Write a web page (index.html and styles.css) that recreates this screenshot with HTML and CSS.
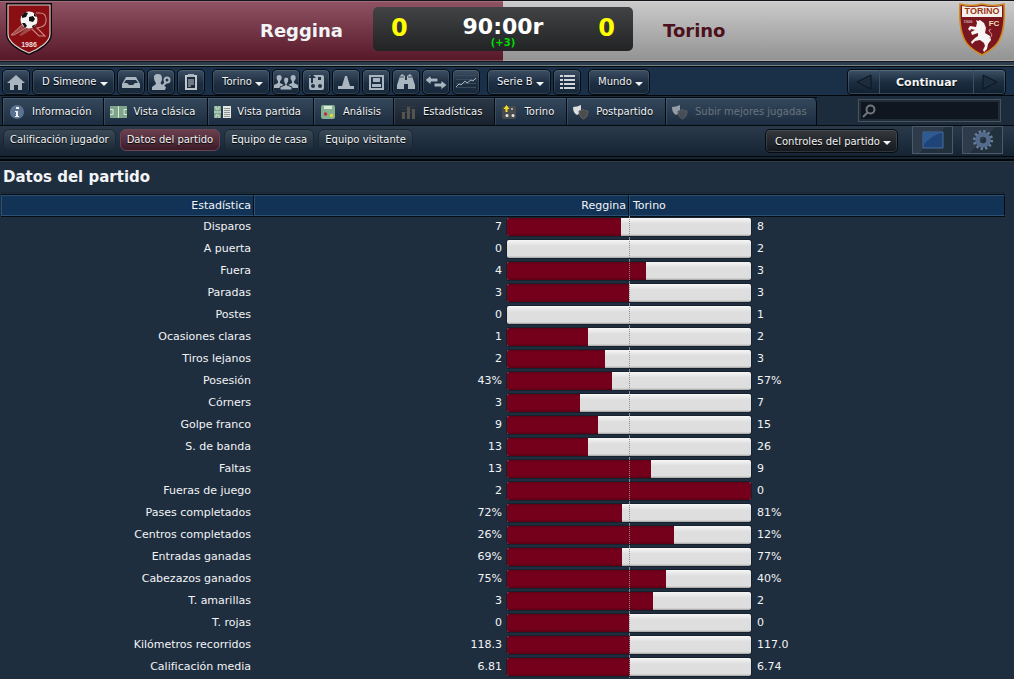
FILE: index.html
```
<!DOCTYPE html>
<html lang="es">

<head>
    <title>Reggina - Torino | Datos del partido</title>
    <meta charset="UTF-8">
    <meta name="viewport" content="width=device-width, initial-scale=1.0">
    <link rel="stylesheet" href="styles.css">
</head>

<body>
    <header class="match-header">
        <div class="team home">
            <svg class="crest" viewBox="0 0 48 54" role="img" aria-label="Reggina">
                <path d="M1 1h46v31c0 9-12 17-23 21C13 49 1 41 1 32z" fill="#0b0709"/>
                <path d="M3 3h42v29c0 8-11 15-21 19C14 47 3 40 3 32z" fill="#8a0f13" stroke="#d8cfcf" stroke-width="1.2"/>
                <path d="M31 11h4c8 0 8 12 1 14l-4 1 8 8h-6l-9-9" fill="none" stroke="#c98a8a" stroke-width="1.1"/>
                <path d="M6 33l13-12 4 4-14 8z" fill="#a04848" stroke="#d7aaaa" stroke-width=".7"/>
                <path d="M14 33l10-9 4 3-12 7z" fill="#a04848"/>
                <circle cx="24" cy="18" r="8.5" fill="#f3f3f3"/>
                <path d="M24 15l4-1 2 3-2 3-4-1zM17 13l3-3 3 1-2 4-4 1zM17 21l3 0 2 3-2 2zM29 11l3 4-3-1zM27 24l4-2-3 4z" fill="#111"/>
                <text x="24" y="45" class="crest-year">1986</text>
            </svg>
            <h2>Reggina</h2>
        </div>
        <div class="scoreboard">
            <span class="score">0</span>
            <div class="clock">
                <span class="time">90:00r</span>
                <span class="extra">(+3)</span>
            </div>
            <span class="score">0</span>
        </div>
        <div class="team away">
            <h2>Torino</h2>
            <svg class="crest" viewBox="0 0 48 54" role="img" aria-label="Torino">
                <path d="M2 2q11 3 22 0q11 3 22 0c1 16 0 33-9 42q-5 5-13 9q-8-4-13-9C2 35 1 18 2 2z" fill="#7a1620" stroke="#d18a22" stroke-width="1.6"/>
                <path d="M4 4q10 2 20 0q10 2 20 0v11H4z" fill="#f4f1ec"/>
                <text x="24" y="12" class="crest-name">TORINO</text>
                <text x="10" y="21" class="crest-small">1906</text>
                <text x="36" y="24" class="crest-fc">FC</text>
                <path d="M18 18l2 1 2-1 4 3 2 5-1 5 5 3 1 4-3 4-1 5-3 3-1-2 2-4-1-3-4-3-5 1-3 3-1-2 4-4 3-2 0-3-6 2-1-3 4-2-4-1-1 2-2-2 2-3 6 1 1-4z" fill="#f7f5f3"/>
                <path d="M31 36c5-2 2-5 0-7 0-2 2-2 2-1" fill="none" stroke="#d9a7ab"/>
            </svg>
        </div>
    </header>

    <div class="main-bar">
        <div class="group">
            <button class="icon-btn" aria-label="Inicio"><svg viewBox="0 0 20 18"><path d="M10 2l9 8h-3v7h-4v-5H8v5H4v-7H1z"/></svg></button>
            <span class="dropdown"><select aria-label="Entrenador"><option>D Simeone</option></select></span>
            <button class="icon-btn" aria-label="Bandeja de entrada"><svg viewBox="0 0 20 18"><path d="M5 4h10l4 7v4H1v-4z"/><path class="cut" d="M5 7h10l2 3h-3l-2 2H8l-2-2H3z"/></svg></button>
            <button class="icon-btn" aria-label="Ojeadores"><svg viewBox="0 0 20 18"><path d="M7 1c4 0 4 3 4 5 0 3-2 3-1 5l5 3-1 3H1v-3l4-3c0-2-2-3-2-6s1-4 4-4z"/><path d="M14 9l-4 4 1 2 5-5z"/><circle cx="16" cy="7" r="2.500" class="ring"/></svg></button>
            <button class="icon-btn" aria-label="Notas"><svg viewBox="0 0 20 18"><path d="M5 3h10v13H5z" fill="#1b2a3a" stroke="#c0c8ce" stroke-width="2"/><path d="M7 1h6v3H7z"/><path d="M7 7h6M7 9h6M7 11h6M7 13h3" stroke="#c0c8ce"/></svg></button>
        </div>
        <div class="group">
            <span class="dropdown"><select aria-label="Club"><option>Torino</option></select></span>
            <button class="icon-btn" aria-label="Plantilla"><svg class="wide" viewBox="0 0 24 18"><path d="M5 2c4 0 3 5 1 6v2l4 2v3H0v-3l4-2V8C2 6 2 2 5 2zM19 2c4 0 3 5 1 6v2l4 2v3H14v-3l4-2V8c-2-2-2-6 1-6z"/><path class="edge" d="M12 4c4 0 3 5 1 7v1l5 2v3H6v-3l5-2v-1c-2-2-2-7 1-7z"/></svg></button>
            <button class="icon-btn" aria-label="Tácticas"><svg viewBox="0 0 20 18"><rect x="3" y="2" width="15" height="15" rx="2"/><path class="cut" d="M6 1l4 4H7v5H5V5H2z"/><circle class="cut" cx="7" cy="13" r="2"/><circle class="cut" cx="14" cy="13" r="2"/><path class="cut" d="M12 4h3v3h-3z"/></svg></button>
            <button class="icon-btn" aria-label="Entrenamiento"><svg viewBox="0 0 20 18"><path d="M9 3h2l3 10h4v3H2v-3h4z"/></svg></button>
            <button class="icon-btn" aria-label="Campo"><svg viewBox="0 0 20 18"><path class="stroke" d="M4 3h13v13H4z"/><path d="M7 5h7v4H7zM6 11h9v3H6z"/></svg></button>
            <button class="icon-btn" aria-label="Buscar jugadores"><svg viewBox="0 0 20 18"><path d="M4 3l2-2 3 2v4h2V3l3-2 2 2 3 9v4h-7v-5H8v5H1v-4z"/><path class="line-dark" d="M4 4h4M12 4h4"/></svg></button>
            <button class="icon-btn" aria-label="Traspasos"><svg class="wide" viewBox="0 0 24 18"><path d="M1 7l6-5v3h7v4H7v3zM23 12l-6-5v3h-7v4h7v3z" class="edge"/></svg></button>
            <button class="icon-btn" aria-label="Finanzas"><svg class="wide" viewBox="0 0 24 18"><path class="grid-line" d="M2 2.500h20M2 6.500h20M2 10.500h20M2 14.500h20"/><path class="stroke thin" d="M2 14l3-3 2 1 4-4 2 2 4-3 2 1 3-3"/></svg></button>
        </div>
        <div class="group">
            <span class="dropdown"><select aria-label="Competición"><option>Serie B</option></select></span>
            <button class="icon-btn" aria-label="Clasificación"><svg viewBox="0 0 20 18"><path d="M3 2h3v2H3zM7 2h11v2H7zM3 6h3v2H3zM7 6h11v2H7zM3 10h3v2H3zM7 10h11v2H7zM3 14h3v2H3zM7 14h11v2H7z" fill="#d0d6db"/></svg></button>
        </div>
        <div class="group">
            <span class="dropdown"><select aria-label="Mundo"><option>Mundo</option></select></span>
        </div>
        <div class="continue">
            <button class="step" aria-label="Anterior"><svg viewBox="0 0 18 18"><path d="M16 2v14L2 9z"/></svg></button>
            <button class="go">Continuar</button>
            <button class="step" aria-label="Siguiente"><svg viewBox="0 0 18 18"><path d="M2 2v14l14-7z"/></svg></button>
        </div>
    </div>

    <div class="tab-bar">
        <nav class="tabs">
            <a href="#"><svg viewBox="0 0 18 16"><circle cx="9" cy="8" r="7" fill="#5b7390"/><path d="M8 3h3v2H8zM7 7h3v5h1v1H7v-1h1V8H7z" fill="#eef2f5"/></svg>Información</a>
            <a href="#"><svg viewBox="0 0 18 16"><path d="M1 2h17v12H1z" fill="#7fa68b"/><path d="M9.500 2v12M1 5.500h3v5H1M18 5.500h-3v5h3" fill="none" stroke="#d5ead9"/></svg>Vista clásica</a>
            <a href="#"><svg viewBox="0 0 18 16"><path d="M1 2h7v12H1z" fill="#7fa68b"/><path d="M1 8h7M3 2v3h3V2M3 14v-3h3v3" fill="none" stroke="#d5ead9"/><path d="M10 2h8v12h-8z" fill="#e5e7e5"/><path d="M11 4.500h6M11 6.500h6M11 8.500h6M11 10.500h6M11 12.500h6" stroke="#8d9494"/></svg>Vista partida</a>
            <a href="#"><svg viewBox="0 0 18 16"><rect x="2" y="1" width="14" height="14" rx="2" fill="#86b092"/><path d="M5 2h8v3H5z" fill="#d5ead9"/><circle cx="6.500" cy="10" r="1.700" fill="#b52f35"/><circle cx="12.500" cy="11.500" r="1.700" fill="#e5dc2a"/></svg>Análisis</a>
            <a href="#" class="current"><svg viewBox="0 0 18 16"><path d="M2 2.500h14M2 5.500h14M2 8.500h14" stroke="#2d3947"/><path d="M3 8h3v7H3zM8 3h3v12H8zM13 5h3v10h-3z" fill="#56534f"/></svg>Estadísticas</a>
            <a href="#"><svg viewBox="0 0 18 16"><rect x="2" y="2" width="14" height="13" rx="2" fill="#4a4b4d"/><path d="M6.500 1l3 4h-2v3h-2V5h-2z" fill="#f0e02c"/><circle cx="7" cy="11.500" r="1.500" fill="#e8e8e8"/><circle cx="13" cy="11.500" r="1.500" fill="#e8e8e8"/><path d="M11 4h2v2h-2z" fill="#a8a8a8"/></svg>Torino</a>
            <a href="#"><svg viewBox="0 0 18 16"><path d="M1 3q4 0 8-2v5q-1 4-4 5-4-2-4-8z" fill="#dcdedf"/><path d="M7 7q3 0 4-1.500Q13 7 16 7q0 6-4.500 8Q7 13 7 7z" fill="#4c4c4c" stroke="#5e6062"/></svg>Postpartido</a>
            <a href="#" class="disabled" aria-disabled="true"><svg viewBox="0 0 18 16"><path d="M1 3q4 0 8-2v5q-1 4-4 5-4-2-4-8z" fill="#dcdedf"/><path d="M7 7q3 0 4-1.500Q13 7 16 7q0 6-4.500 8Q7 13 7 7z" fill="#5c5c5c" stroke="#77797b"/></svg>Subir mejores jugadas</a>
        </nav>
        <label class="search">
            <svg viewBox="0 0 14 14" aria-hidden="true"><circle cx="8.500" cy="5.500" r="4"/><path d="M5.500 8.500L1 13"/></svg>
            <input type="search" aria-label="Buscar">
        </label>
    </div>

    <div class="sub-bar">
        <nav class="sub-tabs">
            <a href="#">Calificación jugador</a>
            <a href="#" class="current">Datos del partido</a>
            <a href="#">Equipo de casa</a>
            <a href="#">Equipo visitante</a>
        </nav>
        <div class="match-controls">
            <span class="dropdown dark"><select aria-label="Controles"><option>Controles del partido</option></select></span>
            <button class="square-btn" aria-label="Pantalla"><svg viewBox="0 0 24 20"><path d="M2 2h20v16H2z" fill="#1f4578" stroke="#4a6d9b"/><path d="M2.500 2.500h19Q9 6 2.500 15z" fill="#2f5b95"/></svg></button>
            <button class="square-btn" aria-label="Preferencias"><svg viewBox="0 0 24 24"><circle cx="12" cy="12" r="9.500" fill="none" stroke="#6a7f9b" stroke-width="3" stroke-dasharray="2.500 2.470"/><circle cx="12" cy="12" r="6" fill="none" stroke="#546b8b" stroke-width="5"/></svg></button>
        </div>
    </div>

    <main>
        <h1>Datos del partido</h1>
        <table class="stats">
            <colgroup>
                <col class="col-name">
                <col class="col-value">
                <col class="col-half">
                <col class="col-half">
                <col>
            </colgroup>
            <thead>
                <tr>
                    <th scope="col">Estadística</th>
                    <th scope="col" colspan="2">Reggina</th>
                    <th scope="col" colspan="2" class="away-head">Torino</th>
                </tr>
            </thead>
            <tbody>
                <tr><th scope="row">Disparos</th><td class="home-value">7</td><td class="bar-cell" colspan="2"><div class="bar"><div class="fill" style="width: 46.7%"></div></div></td><td>8</td></tr>
                <tr><th scope="row">A puerta</th><td class="home-value">0</td><td class="bar-cell" colspan="2"><div class="bar"><div class="fill" style="width: 0%"></div></div></td><td>2</td></tr>
                <tr><th scope="row">Fuera</th><td class="home-value">4</td><td class="bar-cell" colspan="2"><div class="bar"><div class="fill" style="width: 57.1%"></div></div></td><td>3</td></tr>
                <tr><th scope="row">Paradas</th><td class="home-value">3</td><td class="bar-cell" colspan="2"><div class="bar"><div class="fill" style="width: 50%"></div></div></td><td>3</td></tr>
                <tr><th scope="row">Postes</th><td class="home-value">0</td><td class="bar-cell" colspan="2"><div class="bar"><div class="fill" style="width: 0%"></div></div></td><td>1</td></tr>
                <tr><th scope="row">Ocasiones claras</th><td class="home-value">1</td><td class="bar-cell" colspan="2"><div class="bar"><div class="fill" style="width: 33.3%"></div></div></td><td>2</td></tr>
                <tr><th scope="row">Tiros lejanos</th><td class="home-value">2</td><td class="bar-cell" colspan="2"><div class="bar"><div class="fill" style="width: 40%"></div></div></td><td>3</td></tr>
                <tr><th scope="row">Posesión</th><td class="home-value">43%</td><td class="bar-cell" colspan="2"><div class="bar"><div class="fill" style="width: 43%"></div></div></td><td>57%</td></tr>
                <tr><th scope="row">Córners</th><td class="home-value">3</td><td class="bar-cell" colspan="2"><div class="bar"><div class="fill" style="width: 30%"></div></div></td><td>7</td></tr>
                <tr><th scope="row">Golpe franco</th><td class="home-value">9</td><td class="bar-cell" colspan="2"><div class="bar"><div class="fill" style="width: 37.5%"></div></div></td><td>15</td></tr>
                <tr><th scope="row">S. de banda</th><td class="home-value">13</td><td class="bar-cell" colspan="2"><div class="bar"><div class="fill" style="width: 33.3%"></div></div></td><td>26</td></tr>
                <tr><th scope="row">Faltas</th><td class="home-value">13</td><td class="bar-cell" colspan="2"><div class="bar"><div class="fill" style="width: 59.1%"></div></div></td><td>9</td></tr>
                <tr><th scope="row">Fueras de juego</th><td class="home-value">2</td><td class="bar-cell" colspan="2"><div class="bar"><div class="fill" style="width: 100%"></div></div></td><td>0</td></tr>
                <tr><th scope="row">Pases completados</th><td class="home-value">72%</td><td class="bar-cell" colspan="2"><div class="bar"><div class="fill" style="width: 47.1%"></div></div></td><td>81%</td></tr>
                <tr><th scope="row">Centros completados</th><td class="home-value">26%</td><td class="bar-cell" colspan="2"><div class="bar"><div class="fill" style="width: 68.4%"></div></div></td><td>12%</td></tr>
                <tr><th scope="row">Entradas ganadas</th><td class="home-value">69%</td><td class="bar-cell" colspan="2"><div class="bar"><div class="fill" style="width: 47.3%"></div></div></td><td>77%</td></tr>
                <tr><th scope="row">Cabezazos ganados</th><td class="home-value">75%</td><td class="bar-cell" colspan="2"><div class="bar"><div class="fill" style="width: 65.2%"></div></div></td><td>40%</td></tr>
                <tr><th scope="row">T. amarillas</th><td class="home-value">3</td><td class="bar-cell" colspan="2"><div class="bar"><div class="fill" style="width: 60%"></div></div></td><td>2</td></tr>
                <tr><th scope="row">T. rojas</th><td class="home-value">0</td><td class="bar-cell" colspan="2"><div class="bar"><div class="fill" style="width: 50%"></div></div></td><td>0</td></tr>
                <tr><th scope="row">Kilómetros recorridos</th><td class="home-value">118.3</td><td class="bar-cell" colspan="2"><div class="bar"><div class="fill" style="width: 50.3%"></div></div></td><td>117.0</td></tr>
                <tr><th scope="row">Calificación media</th><td class="home-value">6.81</td><td class="bar-cell" colspan="2"><div class="bar"><div class="fill" style="width: 50.3%"></div></div></td><td>6.74</td></tr>
            </tbody>
        </table>
    </main>
</body>

</html>
```
FILE: styles.css
```
* {
    box-sizing: border-box;
}

body {
    margin: 0;
    background: #1f2e3f;
    color: #f2f4f6;
    font: 11px/14px "DejaVu Sans", Verdana, sans-serif;
}

button,
select,
input {
    font: inherit;
    color: inherit;
}

button {
    padding: 0;
    cursor: pointer;
}

a {
    color: inherit;
    text-decoration: none;
}

/* match header */
.match-header {
    display: grid;
    grid-template-columns: 1fr 260px 1fr;
    align-items: center;
    height: 62px;
    padding-right: 8px;
    border-top: 1px solid #15151c;
    border-bottom: 1px solid #15151c;
    box-shadow: inset 0 1px rgba(255, 255, 255, 0.15), inset 0 -1px rgba(255, 255, 255, 0.25);
    background:
        linear-gradient(#8f5364, #561828) 0 0 / calc(50% - 4px) 100% no-repeat,
        linear-gradient(#cbcbcb, #929292);
}

.team {
    display: flex;
    align-items: center;
    justify-content: space-between;
    padding-bottom: 4px;
}

.team h2 {
    margin: 4px 0 0;
    font-size: 18px;
    line-height: 22px;
}

.home {
    padding-left: 5px;
    padding-right: 30px;
}

.away {
    padding-left: 30px;
    color: #4d111d;
}

.crest {
    width: 48px;
    height: 54px;
}

.crest text {
    font-family: "Liberation Sans", Arial, sans-serif;
    font-weight: bold;
    text-anchor: middle;
}

.crest-year {
    font-size: 7px;
    fill: #f1dede;
}

.crest-name {
    font-size: 9px;
    fill: #9a3518;
}

.crest-small {
    font-size: 4px;
    fill: #d5a9ad;
}

.crest-fc {
    font-size: 8px;
    fill: #f3dfb8;
}

.scoreboard {
    display: flex;
    align-items: center;
    justify-content: space-between;
    height: 44px;
    margin-bottom: 4px;
    padding: 0 18px;
    border-radius: 5px;
    background: linear-gradient(#414345, #212325);
    font-weight: bold;
}

.score {
    color: #ffff00;
    font-size: 24px;
    line-height: 28px;
    margin-bottom: 2px;
}

.clock {
    display: flex;
    flex-direction: column;
    align-items: center;
    padding-top: 4px;
}

.time {
    color: #fff;
    font-size: 22px;
    line-height: 24px;
}

.extra {
    color: #00dc00;
    font-size: 10px;
    line-height: 8px;
}

/* main toolbar */
.main-bar {
    display: flex;
    align-items: center;
    gap: 7px;
    height: 34px;
    padding: 6px 8px 0 2px;
    border-bottom: 1px solid #05080c;
    background: linear-gradient(#2b3d4e 3px, #71827d 3px, #71827d 4px, #05080c 4px, #05080c 5px, #1a3049 5px);
    font-size: 10px;
}

.group {
    display: flex;
    gap: 2px;
}

.icon-btn,
.dropdown {
    display: flex;
    align-items: center;
    justify-content: center;
    height: 26px;
    border: 1px solid #060b12;
    border-radius: 5px;
    background: linear-gradient(#3d4f63, #1d2e42 55%, #18283a);
    box-shadow: inset 0 0 0 1px rgba(150, 175, 200, 0.18);
}

.icon-btn {
    width: 28px;
}

.icon-btn svg {
    width: 20px;
    height: 18px;
    fill: #a9b5bf;
}

.icon-btn svg.wide {
    width: 24px;
    height: 18px;
}

.icon-btn .cut {
    fill: #223244;
}

.icon-btn .ring,
.icon-btn .stroke {
    fill: none;
    stroke: #a9b5bf;
    stroke-width: 2;
}

.icon-btn .thin {
    stroke-width: 1;
}

.icon-btn .line-dark,
.icon-btn .grid-line {
    fill: none;
    stroke: #3c4b5a;
}

.icon-btn .edge {
    stroke: #1f2f42;
}

.dropdown {
    position: relative;
}

.dropdown select {
    height: 24px;
    margin: 0;
    padding: 1px 17px 0 9px;
    border: 0;
    background: none;
    appearance: none;
    text-shadow: 0 1px 1px #000;
}

.dropdown option {
    background: #1d2e42;
}

.dropdown::after {
    content: "";
    position: absolute;
    right: 6px;
    top: 50%;
    border: 4px solid transparent;
    border-top-color: #f2f4f6;
    border-bottom: 0;
    pointer-events: none;
}

.continue {
    display: flex;
    width: 159px;
    height: 26px;
    margin-left: auto;
    border: 1px solid #060b12;
    border-radius: 4px;
    background: linear-gradient(#3d5165, #1b2d3f 50%, #102131);
    box-shadow: inset 0 0 0 1px rgba(150, 175, 200, 0.25);
}

.continue button {
    border: 0;
    background: none;
}

.continue .go {
    flex: 1;
    padding-top: 2px;
    border: solid #3b5064;
    border-width: 0 1px;
    font-size: 11px;
    font-weight: bold;
    text-shadow: 0 1px 1px #000;
}

.continue .step {
    width: 31px;
}

.step svg {
    width: 18px;
    height: 18px;
    vertical-align: middle;
    fill: #1c2d3d;
    stroke: #0b141e;
}

/* section tabs */
.tab-bar {
    display: flex;
    justify-content: space-between;
    height: 30px;
    padding: 1px 12px 0 2px;
    border-bottom: 1px solid #05080c;
    background: #1d2c3c;
    font-size: 10px;
}

.tabs {
    display: flex;
    border: 1px solid #05080c;
    border-width: 1px 0 0 1px;
}

.tabs a {
    display: flex;
    align-items: center;
    gap: 6px;
    padding: 0 12px 0 5px;
    border-right: 1px solid #05080c;
    background: linear-gradient(#35485b, #1d2d41);
    box-shadow: inset 1px 1px rgba(150, 175, 200, 0.18);
    text-shadow: 0 1px 1px #000;
}

.tabs a:last-child {
    padding-right: 9px;
    border-top-right-radius: 5px;
}

.tabs svg {
    width: 18px;
    height: 16px;
}

.tabs .current {
    background: linear-gradient(#2c3846, #18222e);
}

.tabs .disabled {
    color: #68747f;
    text-shadow: none;
}

.disabled svg {
    opacity: 0.6;
}

.search {
    display: flex;
    align-items: center;
    width: 145px;
    height: 25px;
    margin-top: 1px;
    padding: 0 1px;
    border: 4px solid #202d39;
    outline: 1px solid #465360;
    outline-offset: -2px;
    background: #0f1620;
}

.search svg {
    flex: none;
    width: 14px;
    height: 14px;
    fill: none;
    stroke: #70777d;
    stroke-width: 2;
}

.search input {
    flex: 1;
    min-width: 0;
    height: 16px;
    border: 0;
    outline: 0;
    background: none;
}

/* sub tabs and match controls */
.sub-bar {
    display: flex;
    justify-content: space-between;
    height: 35px;
    padding: 0 11px 0 3px;
    border-bottom: 2px solid #020508;
    background: linear-gradient(#2b3a4b, #142433 30px, #020508 30px, #020508 31px, #142433 31px);
    font-size: 10px;
}

.sub-tabs {
    display: flex;
    align-items: flex-start;
    gap: 4px;
    padding-top: 3px;
}

.sub-tabs a {
    padding: 3px 6px;
    border: 1px solid #1b2733;
    border-radius: 6px;
    background: linear-gradient(#3b4957, #1c2a38);
    text-shadow: 0 1px 1px #000;
}

.sub-tabs .current {
    border-color: #6b4451;
    background: linear-gradient(#6b404e, #3c1a28);
}

.match-controls {
    display: flex;
    align-items: flex-start;
    gap: 9px;
}

.dropdown.dark {
    height: 24px;
    margin: 3px 5px 0 0;
    background: linear-gradient(#35383c, #14171b);
}

.dark select {
    height: 22px;
}

.square-btn {
    display: flex;
    align-items: center;
    justify-content: center;
    width: 41px;
    height: 28px;
    border: 1px solid #4b5a69;
    background: linear-gradient(135deg, #2d3b4a 50%, #222f3d 50%);
}

.square-btn svg {
    width: 24px;
    height: 22px;
}

/* stats table */
main {
    padding: 0 9px 1px 1px;
    border-top: 1px solid #2d3c4b;
}

h1 {
    margin: 0 0 2px;
    padding: 5px 2px;
    border-bottom: 1px solid #1a2735;
    font-size: 15px;
    line-height: 20px;
}

.stats {
    width: 100%;
    table-layout: fixed;
    border-collapse: separate;
    border-spacing: 0;
}

.col-name {
    width: 25.2%;
}

.col-value {
    width: 25.2%;
}

.col-half {
    width: 12.15%;
}

.stats th,
.stats td {
    height: 22px;
    padding: 0 3px;
    font-weight: normal;
    text-align: right;
}

.stats thead th {
    height: 21px;
    padding: 0 2px 0 3px;
    border: 1px solid #2a5073;
    border-right-color: #050c14;
    background: #123356;
    box-shadow: 0 -1px #050c14, 0 1px #050c14;
}

.stats thead .away-head,
.stats td {
    text-align: left;
}

.stats td {
    padding-left: 6px;
}

.stats .home-value {
    padding-right: 5px;
    text-align: right;
}

.stats .bar-cell {
    position: relative;
    padding: 0;
}

.bar {
    height: 18px;
    border-radius: 2px;
    overflow: hidden;
    background: linear-gradient(#f6f6f6, #dedede 6px, #dedede 16px, #a0a0a0);
    box-shadow: 0 0 0 1px #17222e;
}

.fill {
    height: 18px;
    background: linear-gradient(#5c0016, #75001b 2px, #75001b 15px, #5c0016);
}

/* dotted half-way line over every bar */
.bar-cell::after {
    content: "";
    position: absolute;
    top: 0;
    bottom: 0;
    left: 50%;
    border-left: 1px dotted #8d8d8d;
}
```
